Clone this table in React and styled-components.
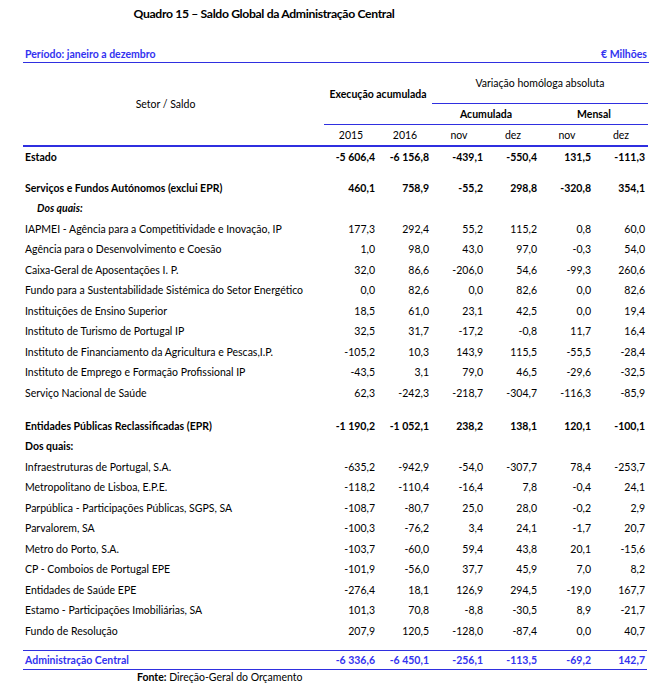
import React from "react";
import styled, { createGlobalStyle } from "styled-components";

const BLUE = "#3333f0";
const LINE = "#2f2fe0";
const COLS = "301px repeat(6, 54px)";

const Global = createGlobalStyle`
  html, body { margin: 0; padding: 0; background: #fff; }
  body { font-family: "Lato", "Liberation Sans", sans-serif; font-size: 10.5px; color: #000; }
`;

const Page = styled.div`
  width: 665px;
  height: 686px;
  padding: 4px 0 0 23px;
  box-sizing: border-box;
  overflow: hidden;
`;

const Title = styled.h1`
  margin: 0 0 0 -23px;
  width: 528px;
  text-align: center;
  font-size: 12.2px;
  letter-spacing: -0.35px;
  line-height: 20px;
  font-weight: 700;
`;

const PeriodBar = styled.div`
  width: 626px;
  margin-top: 24px;
  display: flex;
  justify-content: space-between;
  align-items: center;
  line-height: 13px;
  padding: 0 2px 1px 2px;
  box-sizing: border-box;
  border-bottom: 1px solid ${LINE};
  color: ${BLUE};
  font-weight: 700;
`;

const Head = styled.div`
  display: grid;
  grid-template-columns: ${COLS};
  grid-template-rows: 41px 21px 22px;
  width: 624px;
`;

const HeadCell = styled.div`
  grid-column: ${(p) => p.$col};
  grid-row: ${(p) => p.$row};
  display: flex;
  align-items: center;
  justify-content: center;
  box-sizing: border-box;
  font-weight: ${(p) => (p.$bold ? 700 : 400)};
  border-bottom: ${(p) => p.$border || "none"};
  padding: ${(p) => p.$pad || "0"};
`;

const Row = styled.div`
  display: grid;
  grid-template-columns: ${COLS};
  width: 624px;
  height: ${(p) => (p.$total ? "20px" : "20.5px")};
  align-items: center;
  box-sizing: border-box;
  font-weight: ${(p) => (p.$bold ? 700 : 400)};
  color: ${(p) => (p.$total ? BLUE : "#000")};
  border-top: ${(p) => (p.$total ? `1px solid ${LINE}` : "none")};
  border-bottom: ${(p) => (p.$total ? `1px solid ${LINE}` : "none")};
  margin-top: ${(p) => p.$gap || 0}px;
  white-space: nowrap;
`;

const Label = styled.div`
  padding-left: ${(p) => (p.$indent ? 14 : 2)}px;
  font-style: ${(p) => (p.$italic ? "italic" : "normal")};
`;

const Num = styled.div`
  text-align: right;
  padding-right: 3px;
`;

const Source = styled.div`
  padding-left: 114px;
  margin-top: 1px;
  line-height: 13px;
  b { font-weight: 700; }
`;

const thick = `2px solid ${LINE}`;
const thin = `1px solid ${LINE}`;

const rows = [
  { label: "Estado", bold: true, v: ["-5 606,4", "-6 156,8", "-439,1", "-550,4", "131,5", "-111,3"] },
  { label: "Serviços e Fundos Autónomos  (exclui EPR)", bold: true, gap: 10, v: ["460,1", "758,9", "-55,2", "298,8", "-320,8", "354,1"] },
  { label: "Dos quais:", bold: true, italic: true, indent: true },
  { label: "IAPMEI - Agência para a Competitividade e Inovação, IP", v: ["177,3", "292,4", "55,2", "115,2", "0,8", "60,0"] },
  { label: "Agência para o Desenvolvimento e Coesão", v: ["1,0", "98,0", "43,0", "97,0", "-0,3", "54,0"] },
  { label: "Caixa-Geral de Aposentações I. P.", v: ["32,0", "86,6", "-206,0", "54,6", "-99,3", "260,6"] },
  { label: "Fundo para a Sustentabilidade Sistémica do Setor Energético", v: ["0,0", "82,6", "0,0", "82,6", "0,0", "82,6"] },
  { label: "Instituições de Ensino Superior", v: ["18,5", "61,0", "23,1", "42,5", "0,0", "19,4"] },
  { label: "Instituto de Turismo de Portugal IP", v: ["32,5", "31,7", "-17,2", "-0,8", "11,7", "16,4"] },
  { label: "Instituto de Financiamento da Agricultura e Pescas,I.P.", v: ["-105,2", "10,3", "143,9", "115,5", "-55,5", "-28,4"] },
  { label: "Instituto de Emprego e  Formação Profissional IP", v: ["-43,5", "3,1", "79,0", "46,5", "-29,6", "-32,5"] },
  { label: "Serviço Nacional de Saúde", v: ["62,3", "-242,3", "-218,7", "-304,7", "-116,3", "-85,9"] },
  { label: "Entidades Públicas Reclassificadas (EPR)", bold: true, gap: 12.5, v: ["-1 190,2", "-1 052,1", "238,2", "138,1", "120,1", "-100,1"] },
  { label: "Dos quais:", bold: true },
  { label: "Infraestruturas de Portugal, S.A.", v: ["-635,2", "-942,9", "-54,0", "-307,7", "78,4", "-253,7"] },
  { label: "Metropolitano de Lisboa, E.P.E.", v: ["-118,2", "-110,4", "-16,4", "7,8", "-0,4", "24,1"] },
  { label: "Parpública - Participações Públicas, SGPS, SA", v: ["-108,7", "-80,7", "25,0", "28,0", "-0,2", "2,9"] },
  { label: "Parvalorem, SA", v: ["-100,3", "-76,2", "3,4", "24,1", "-1,7", "20,7"] },
  { label: "Metro do Porto, S.A.", v: ["-103,7", "-60,0", "59,4", "43,8", "20,1", "-15,6"] },
  { label: "CP - Comboios de Portugal EPE", v: ["-101,9", "-56,0", "37,7", "45,9", "7,0", "8,2"] },
  { label: "Entidades de Saúde EPE", v: ["-276,4", "18,1", "126,9", "294,5", "-19,0", "167,7"] },
  { label: "Estamo - Participações Imobiliárias, SA", v: ["101,3", "70,8", "-8,8", "-30,5", "8,9", "-21,7"] },
  { label: "Fundo de Resolução", v: ["207,9", "120,5", "-128,0", "-87,4", "0,0", "40,7"] },
  { label: "Administração Central", bold: true, total: true, gap: 9, v: ["-6 336,6", "-6 450,1", "-256,1", "-113,5", "-69,2", "142,7"] },
];

const years = ["2015", "2016", "nov", "dez", "nov", "dez"];

export default function App() {
  return (
    <>
      <Global />
      <Page>
        <Title>Quadro 15 – Saldo Global da Administração Central</Title>
        <PeriodBar>
          <span>Período: janeiro a dezembro</span>
          <span>€ Milhões</span>
        </PeriodBar>
        <Head>
          <HeadCell $col="1" $row="1 / 4" $border={thick} $pad="0 16px 0 0">Setor / Saldo</HeadCell>
          <HeadCell $col="2 / 4" $row="1 / 3" $bold $border={thin}>Execução acumulada</HeadCell>
          <HeadCell $col="4 / 8" $row="1" $border={thin}>Variação homóloga absoluta</HeadCell>
          <HeadCell $col="4 / 6" $row="2" $bold $border={thin}>Acumulada</HeadCell>
          <HeadCell $col="6 / 8" $row="2" $bold $border={thin}>Mensal</HeadCell>
          {years.map((y, i) => (
            <HeadCell key={i} $col={`${i + 2}`} $row="3" $border={thick}>{y}</HeadCell>
          ))}
        </Head>
        {rows.map((r, i) => (
          <Row key={i} $bold={r.bold} $total={r.total} $gap={r.gap}>
            <Label $indent={r.indent} $italic={r.italic}>{r.label}</Label>
            {(r.v || []).map((n, j) => (
              <Num key={j}>{n}</Num>
            ))}
          </Row>
        ))}
        <Source><b>Fonte:</b> Direção-Geral do Orçamento</Source>
      </Page>
    </>
  );
}
